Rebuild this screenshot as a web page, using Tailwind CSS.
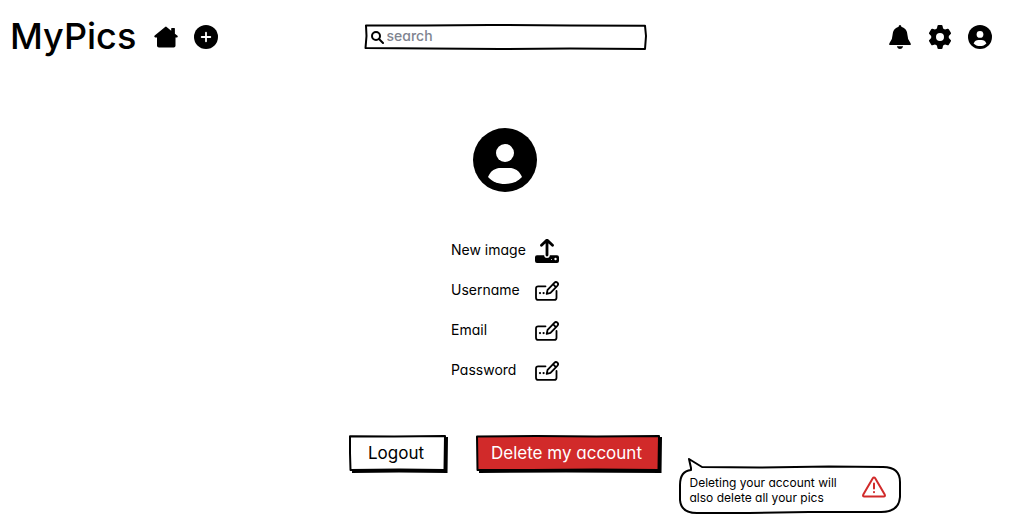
<!DOCTYPE html>
<html lang="en">
<head>
<meta charset="utf-8">
<meta name="viewport" content="width=device-width, initial-scale=1">
<title>MyPics</title>
<script src="https://cdn.jsdelivr.net/npm/@tailwindcss/browser@4"></script>
</head>
<body class="min-h-screen bg-white text-black font-['Inter','Lato',sans-serif] [font-feature-settings:'cv11']">
<svg class="hidden" aria-hidden="true">
  <symbol id="user" viewBox="0 0 64 64">
    <circle cx="32" cy="32" r="32"/>
    <circle cx="32" cy="25" r="9" fill="#fff"/>
    <path d="M15 49C18 42.500 22 40 28 40H36C42 40 46 42.500 49 49C45 53.500 39 56 32 56S19 53.500 15 49Z" fill="#fff"/>
  </symbol>
  <symbol id="edit" viewBox="0 -1.500 24 24">
    <g fill="none" stroke="currentColor" stroke-width="1.800" stroke-linecap="round" stroke-linejoin="round">
      <path d="M10.500 5.800H3.200Q1 5.800 1 8V17.200Q1 19.400 3.200 19.400H19.300Q21.500 19.400 21.500 17.200V10.500"/>
      <path d="M11.700 13.400L12.600 9.300L19.300 2.300Q20.900 .700 22.400 2.200Q23.900 3.700 22.300 5.400L15.500 12.300ZM18 3.700L20.900 6.600"/>
    </g>
    <circle cx="5" cy="12.600" r="1.100"/><circle cx="8.600" cy="12.600" r="1.100"/>
  </symbol>
</svg>

<header class="grid grid-cols-[1fr_282px_1fr] items-center h-[74px] px-[10px]">
  <div class="flex items-center">
    <a href="#" class="text-4xl font-medium w-[128px] whitespace-nowrap pb-[2px]">MyPics</a>
    <nav class="flex items-center gap-4 ml-4">
      <a href="#" aria-label="Home"><svg class="size-6 block" viewBox="0 0 24 24"><path d="M12 1.500L17.200 5.700V3.600Q17.200 3 17.800 3H20.300Q20.900 3 20.900 3.600V8.700L23.500 10.800Q24.300 12.500 22.700 12.600H21.500V20.800Q21.500 22.600 19.700 22.600H5Q3 22.600 3 20.800V12.600H1.300Q-.400 12 .700 10.600L10.800 2.200Q11.500 1.500 12 1.500Z"/></svg></a>
      <a href="#" aria-label="Add picture"><svg class="size-6 block" viewBox="0 0 24 24"><circle cx="12" cy="12" r="12"/><path d="M12 7.700V16.300M7.700 12H16.300" stroke="#fff" stroke-width="1.800" stroke-linecap="round"/></svg></a>
    </nav>
  </div>
  <div class="relative flex items-center h-[26px] px-[6px]">
    <svg class="absolute inset-0 size-full overflow-visible pointer-events-none" viewBox="0 0 282 26" preserveAspectRatio="none" fill="none" stroke="#000" stroke-width="2" stroke-linejoin="round" aria-hidden="true"><path d="M1 1.600L60 1.500L125 1L205 1.400L280 1.700L281 12L280 25L205 24.500L135 25L65 24.400L.500 24L1.500 12Z"/></svg>
    <svg class="size-[13px]" viewBox="0 0 13 13" fill="none" stroke="#000" stroke-width="2" stroke-linecap="round" aria-hidden="true"><circle cx="5" cy="5" r="4"/><path d="M8 8L12 12"/></svg>
    <input type="search" aria-label="Search" placeholder="search" class="min-w-0 flex-1 ml-[3px] pb-[2px] text-sm leading-5 font-medium bg-transparent outline-none placeholder:text-[#808490]">
  </div>
  <nav class="flex items-center justify-end gap-4 mr-[9px]">
    <a href="#" aria-label="Notifications"><svg class="size-6 block" viewBox="0 0 24 24"><path d="M12 0Q13.300 0 13.400 1.700Q19.300 3.300 19.500 10.300Q19.500 14.500 22.300 17.700Q23.600 20 21.800 20H2.200Q.400 20 1.700 17.700Q4.500 14.500 4.500 10.300Q4.700 3.300 10.600 1.700Q10.700 0 12 0ZM8.900 21.700Q8.500 21.300 9.200 21.300H14.800Q15.500 21.300 15.100 21.700Q14 24 12 24T8.900 21.700Z"/></svg></a>
    <a href="#" aria-label="Settings"><svg class="size-6 block" viewBox="0 0 24 24"><path fill-rule="evenodd" d="M10.500 0H13.500Q14.300 0 14.500.800L15.100 3.400L17 4.500L19.600 3.700Q20.400 3.500 20.800 4.200L22.900 7.700Q23.300 8.400 22.700 9L20.800 10.900V13.100L22.700 15Q23.300 15.600 22.900 16.300L20.800 19.800Q20.400 20.500 19.600 20.300L17 19.500L15.100 20.600L14.500 23.200Q14.300 24 13.500 24H10.500Q9.700 24 9.500 23.200L8.900 20.600L7 19.500L4.400 20.300Q3.600 20.500 3.200 19.800L1.100 16.300Q.700 15.600 1.300 15L3.200 13.100V10.900L1.300 9Q.700 8.400 1.100 7.700L3.200 4.200Q3.600 3.500 4.400 3.700L7 4.500L8.900 3.400L9.500.800Q9.700 0 10.500 0ZM12 8A4 4 0 1 0 12 16A4 4 0 1 0 12 8Z"/></svg></a>
    <a href="#" aria-label="Account"><svg class="size-6 block"><use href="#user"/></svg></a>
  </nav>
</header>

<main class="flex flex-col items-center pt-[54px] pb-5 pr-px">
  <svg class="size-16" role="img" aria-label="Profile picture"><use href="#user"/></svg>

  <ul class="mt-[39px] w-[108px] text-sm">
    <li><button class="flex w-full h-10 items-center justify-between whitespace-nowrap cursor-pointer"><span class="pb-[2px]">New image</span>
      <svg class="size-6 shrink-0" viewBox="0 0 24 24"><path d="M12 16V2M6.500 6.300L12 1L17.500 6.300" fill="none" stroke="#000" stroke-width="2.800" stroke-linecap="round" stroke-linejoin="round"/><path d="M2 16.300H9.200V17Q9.500 19 12 19T14.800 17V16.300H22Q24 16.300 24 18.300V22Q24 24 22 24H2Q0 24 0 22V18.300Q0 16.300 2 16.300Z"/><circle cx="20.500" cy="20" r="1.200" fill="#fff"/><circle cx="16.500" cy="20.500" r=".500" fill="#fff"/></svg></button></li>
    <li><button class="flex w-full h-10 items-center justify-between whitespace-nowrap cursor-pointer"><span class="pb-[2px]">Username</span><svg class="size-6 shrink-0"><use href="#edit"/></svg></button></li>
    <li><button class="flex w-full h-10 items-center justify-between whitespace-nowrap cursor-pointer"><span class="pb-[2px]">Email</span><svg class="size-6 shrink-0"><use href="#edit"/></svg></button></li>
    <li><button class="flex w-full h-10 items-center justify-between whitespace-nowrap cursor-pointer"><span class="pb-[2px]">Password</span><svg class="size-6 shrink-0"><use href="#edit"/></svg></button></li>
  </ul>

  <div class="mt-11 flex gap-7">
    <button class="relative w-[99px] h-[38px] pb-[2px] pr-1 text-[17px] leading-6 cursor-pointer">
      <svg class="absolute inset-0 size-full" viewBox="0 0 99 38" preserveAspectRatio="none" aria-hidden="true"><path d="M4 4L99 2L98.500 38L50 37.500L3 38Z"/><path d="M1 1.300L45 1.600L96 1L95.500 35L50 34.500L1.500 35L1 18Z" fill="#fff" stroke="#000" stroke-width="2" stroke-linejoin="round"/></svg>
      <span class="relative">Logout</span>
    </button>
    <div class="relative">
      <button class="relative w-[186px] h-[38px] pb-[2px] pr-1 text-[17px] leading-6 text-white cursor-pointer whitespace-nowrap" aria-describedby="delete-note">
        <svg class="absolute inset-0 size-full" viewBox="0 0 186 38" preserveAspectRatio="none" aria-hidden="true"><path d="M4 4L186 2L185.500 38L90 37.500L3 38Z"/><path d="M1 1.500L60 1L120 1.500L183 1L182.500 35L120 34.500L55 35L1.500 35Z" fill="#d12a2a" stroke="#000" stroke-width="2" stroke-linejoin="round"/></svg>
        <span class="relative">Delete my account</span>
      </button>
      <div id="delete-note" role="tooltip" class="absolute left-[203px] top-[23px] w-[222px] h-14 pt-[17px] pl-[11px] pr-[15px] flex items-start justify-between text-xs leading-[15px]">
        <svg class="absolute inset-0 size-full" viewBox="0 0 222 56" preserveAspectRatio="none" fill="#fff" stroke="#000" stroke-width="2" stroke-linejoin="round" aria-hidden="true"><path d="M12 10L10 1L23 9L80 9.500L150 8.500L204 9Q221 9 221 24V39Q220 54 202 54L130 54L70 55H18Q2 55 1 42V27Q1 13 12 12Z"/></svg>
        <p class="relative whitespace-nowrap">Deleting your account will<br>also delete all your pics</p>
        <svg class="relative size-6 shrink-0" viewBox="0 0 24 24" fill="none" stroke="#d12a2a" stroke-width="2" stroke-linecap="round" stroke-linejoin="round" aria-hidden="true"><path d="M12 2.500Q12.700 2.500 13.200 3.300L22.700 19.500Q23.500 21.500 21.700 21.500H2.300Q.500 21.500 1.300 19.500L10.800 3.300Q11.300 2.500 12 2.500ZM12 8.500V13.500M12 17V17.200"/></svg>
      </div>
    </div>
  </div>
</main>
</body>
</html>
